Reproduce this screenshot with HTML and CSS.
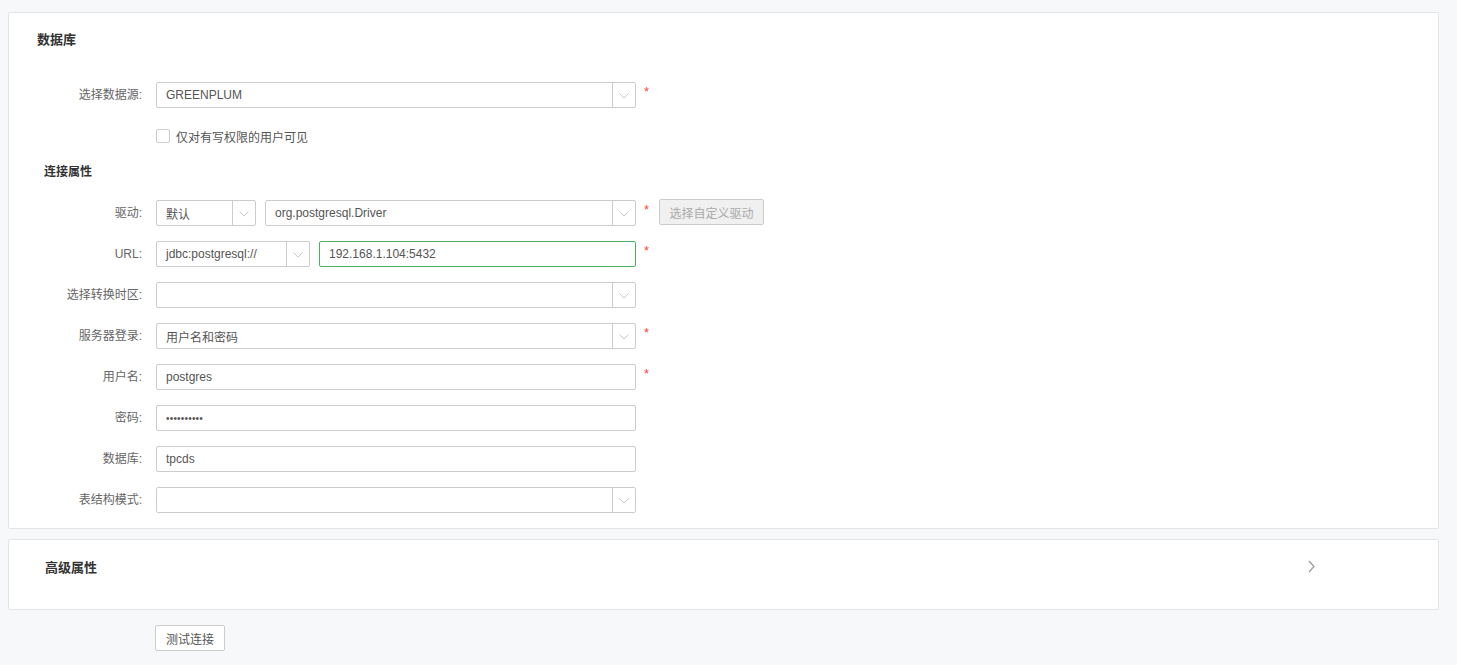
FILE: index.html
```html
<!DOCTYPE html>
<html lang="zh-CN">
<head>
<meta charset="utf-8">
<title>数据库</title>
<link rel="stylesheet" href="styles.css">
</head>
<body>
<div class="page">
  <section class="panel panel-main">
    <h2 class="panel-title">数据库</h2>

    <div class="row row-first">
      <label class="lbl">选择数据源:</label>
      <div class="ctl select w480"><span class="val">GREENPLUM</span><span class="arrow"><svg width="10" height="6" viewBox="0 0 10 6"><polyline points="0.5,0.5 5,5 9.5,0.5" fill="none" stroke="#c8c8c8" stroke-width="1"/></svg></span></div>
      <span class="req">*</span>
    </div>

    <div class="check-row">
      <span class="checkbox"></span><span class="check-text">仅对有写权限的用户可见</span>
    </div>

    <h3 class="sub-title">连接属性</h3>

    <div class="row">
      <label class="lbl">驱动:</label>
      <div class="ctl select w100"><span class="val">默认</span><span class="arrow"><svg width="10" height="6" viewBox="0 0 10 6"><polyline points="0.5,0.5 5,5 9.5,0.5" fill="none" stroke="#c8c8c8" stroke-width="1"/></svg></span></div>
      <div class="ctl select w371 ml9"><span class="val">org.postgresql.Driver</span><span class="arrow"><svg width="10" height="6" viewBox="0 0 10 6"><polyline points="0.5,0.5 5,5 9.5,0.5" fill="none" stroke="#c8c8c8" stroke-width="1"/></svg></span></div>
      <span class="req">*</span>
      <button class="btn-disabled" type="button">选择自定义驱动</button>
    </div>

    <div class="row">
      <label class="lbl">URL:</label>
      <div class="ctl select w154"><span class="val">jdbc:postgresql://</span><span class="arrow"><svg width="10" height="6" viewBox="0 0 10 6"><polyline points="0.5,0.5 5,5 9.5,0.5" fill="none" stroke="#c8c8c8" stroke-width="1"/></svg></span></div>
      <div class="ctl w317 ml9 focused"><span class="val">192.168.1.104:5432</span></div>
      <span class="req">*</span>
    </div>

    <div class="row">
      <label class="lbl">选择转换时区:</label>
      <div class="ctl select w480"><span class="val"></span><span class="arrow"><svg width="10" height="6" viewBox="0 0 10 6"><polyline points="0.5,0.5 5,5 9.5,0.5" fill="none" stroke="#c8c8c8" stroke-width="1"/></svg></span></div>
    </div>

    <div class="row">
      <label class="lbl">服务器登录:</label>
      <div class="ctl select w480"><span class="val">用户名和密码</span><span class="arrow"><svg width="10" height="6" viewBox="0 0 10 6"><polyline points="0.5,0.5 5,5 9.5,0.5" fill="none" stroke="#c8c8c8" stroke-width="1"/></svg></span></div>
      <span class="req">*</span>
    </div>

    <div class="row">
      <label class="lbl">用户名:</label>
      <div class="ctl w480"><span class="val">postgres</span></div>
      <span class="req">*</span>
    </div>

    <div class="row">
      <label class="lbl">密码:</label>
      <div class="ctl w480"><span class="val dots">••••••••••</span></div>
    </div>

    <div class="row">
      <label class="lbl">数据库:</label>
      <div class="ctl w480"><span class="val">tpcds</span></div>
    </div>

    <div class="row">
      <label class="lbl">表结构模式:</label>
      <div class="ctl select w480"><span class="val"></span><span class="arrow"><svg width="10" height="6" viewBox="0 0 10 6"><polyline points="0.5,0.5 5,5 9.5,0.5" fill="none" stroke="#c8c8c8" stroke-width="1"/></svg></span></div>
    </div>
  </section>

  <section class="panel panel-adv">
    <h3 class="adv-title">高级属性</h3>
    <svg class="adv-chevron" width="7" height="13" viewBox="0 0 7 13"><polyline points="1,1 6,6.5 1,12" fill="none" stroke="#999" stroke-width="1.2"/></svg>
  </section>

  <div class="actions">
    <button class="btn" type="button">测试连接</button>
  </div>
</div>
</body>
</html>
```

FILE: styles.css
```css
* { box-sizing: border-box; }
html, body { margin: 0; padding: 0; }
body {
  background: #f7f8fa;
  font-family: "Liberation Sans", "Noto Sans CJK SC", sans-serif;
  font-size: 12px;
  color: #555;
}
.page {
  padding: 12px 18px 0 8px;
}
.panel {
  background: #fff;
  border: 1px solid #e3e4e6;
  border-radius: 2px;
}
.panel-main {
  padding: 17px 0 15px 0;
}
.panel-title {
  margin: 0 0 0 28px;
  font-size: 13px;
  font-weight: bold;
  color: #333;
  line-height: 20px;
}
.row {
  display: flex;
  align-items: flex-start;
  margin-top: 15px;
  height: 26px;
}
.row-first { margin-top: 32px; }
.lbl {
  width: 133px;
  text-align: right;
  margin-right: 14px;
  line-height: 26px;
  color: #666;
  flex: none;
}
.ctl {
  height: 26px;
  border: 1px solid #ccc;
  border-radius: 2px;
  display: flex;
  align-items: center;
  background: #fff;
  flex: none;
}
.ctl .val {
  flex: 1;
  padding-left: 9px;
  color: #555;
  white-space: nowrap;
  overflow: hidden;
}
.ctl .val.dots {
  font-size: 10px;
  letter-spacing: 0.2px;
}
.ctl .arrow {
  width: 23px;
  height: 100%;
  border-left: 1px solid #ccc;
  display: flex;
  align-items: center;
  justify-content: center;
  padding-top: 2px;
  flex: none;
}
.ctl.focused { border-color: #4caf62; }
.w480 { width: 480px; }
.w100 { width: 100px; }
.w371 { width: 371px; }
.w154 { width: 154px; }
.w317 { width: 317px; }
.ml9 { margin-left: 9px; }
.req {
  color: #f44;
  margin-left: 8px;
  width: 7px;
  line-height: 20px;
  font-size: 13px;
  flex: none;
}
.btn-disabled {
  margin-left: 8px;
  height: 26px;
  width: 105px;
  margin-top: -1px;
  padding: 0;
  border: 1px solid #ccc;
  border-radius: 2px;
  background: #f0f0f0;
  color: #aaa;
  font-family: inherit;
  font-size: 12px;
}
.check-row {
  display: flex;
  align-items: center;
  margin: 21px 0 0 147px;
  height: 14px;
}
.checkbox {
  width: 14px;
  height: 14px;
  border: 1px solid #ccc;
  border-radius: 2px;
  background: #fff;
}
.check-text {
  margin-left: 6px;
  color: #555;
}
.sub-title {
  margin: 19px 0 0 35px;
  font-size: 12px;
  font-weight: bold;
  color: #333;
  line-height: 20px;
}
.panel-main .sub-title + .row { margin-top: 18px; }
.panel-adv {
  margin-top: 10px;
  padding: 18px 0 31px 36px;
  display: flex;
  align-items: center;
}
.adv-title {
  margin: 0;
  font-size: 13px;
  font-weight: bold;
  color: #333;
  line-height: 20px;
  flex: 1;
}
.adv-chevron {
  margin-right: 123px;
  margin-top: -4px;
}
.actions {
  padding: 15px 0 0 147px;
}
.btn {
  height: 26px;
  width: 70px;
  padding: 0;
  border: 1px solid #ccc;
  border-radius: 2px;
  background: #fff;
  color: #555;
  font-family: inherit;
  font-size: 12px;
}
```
